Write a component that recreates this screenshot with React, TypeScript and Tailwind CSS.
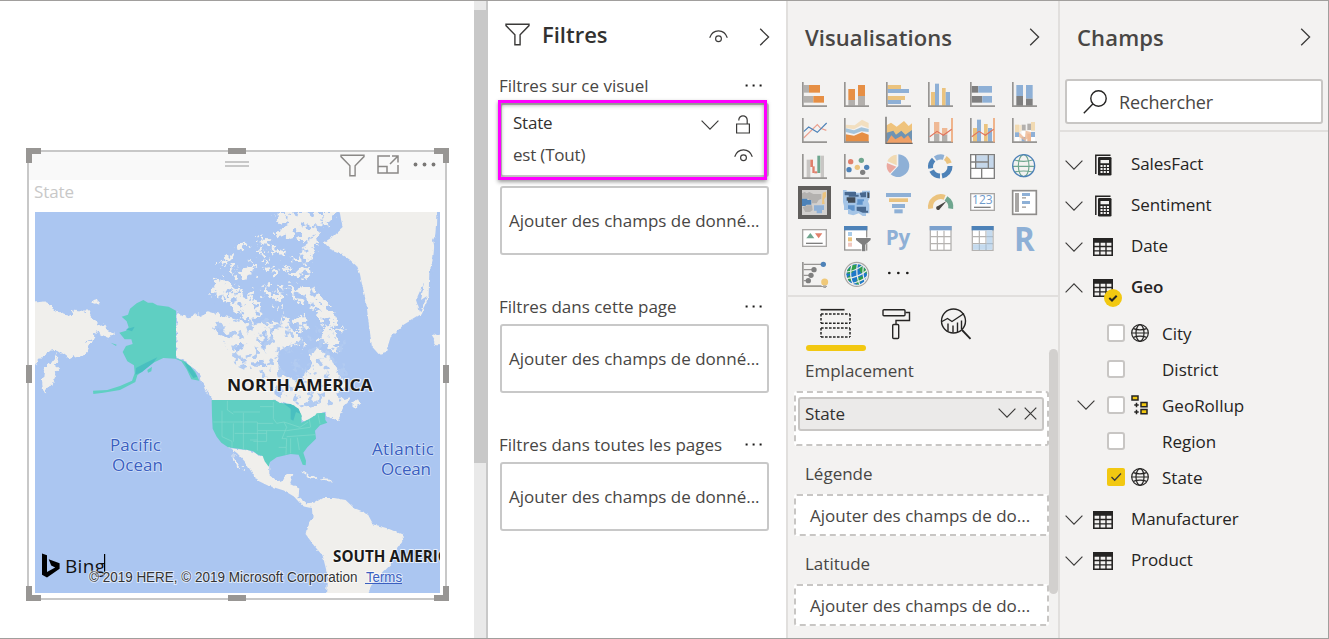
import type { ReactNode } from "react";

/* ---------- small glyphs ---------- */

function Chevron({ dir, className = "" }: { dir: "up" | "down" | "right"; className?: string }) {
  if (dir === "right")
    return (
      <svg width="11" height="18" viewBox="0 0 11 18" fill="none" stroke="#3b3a39" strokeWidth="1.3" className={"shrink-0 " + className}>
        <path d="M1.2 .8 9.6 9l-8.4 8.2" />
      </svg>
    );
  return (
    <svg width="18" height="10" viewBox="0 0 18 10" fill="none" stroke="#3b3a39" strokeWidth="1.15" className={"shrink-0 " + className}>
      <path d={dir === "down" ? "M.6.7 9 9.1 17.4.7" : "M.6 9.3 9 .9l8.4 8.4"} />
    </svg>
  );
}

function Funnel({ stroke, className = "" }: { stroke: string; className?: string }) {
  return (
    <svg width="25" height="23" viewBox="0 0 25 23" fill="none" stroke={stroke} strokeWidth="1.4" className={"shrink-0 " + className}>
      <path d="M1 1.2h23v1.4l-8.9 9.2v10H9.9v-10L1 2.6z" />
    </svg>
  );
}

function Eye({ className = "" }: { className?: string }) {
  return (
    <svg width="19" height="13" viewBox="0 0 19 13" fill="none" stroke="#3b3a39" strokeWidth="1.15" className={"shrink-0 " + className}>
      <path d="M.7 7.8C2.2 3.4 5.400.9 9.500.9s7.300 2.500 8.800 6.900" />
      <circle cx="9.500" cy="8.700" r="2.900" />
    </svg>
  );
}

function Dots({ className = "" }: { className?: string }) {
  return (
    <svg width="18" height="3" viewBox="0 0 18 3" fill="#1b1a19" className={"shrink-0 " + className}>
      <rect x=".6" y=".5" width="2" height="2" />
      <rect x="7.600" y=".5" width="2" height="2" />
      <rect x="14.600" y=".5" width="2" height="2" />
    </svg>
  );
}

/* ---------- map visual ---------- */

const ARCTIC = [
  "M755 225 770 210H940L935 232 910 250 880 262 890 300 872 330 866 362 825 366 808 350 840 338 848 304 820 284 790 292 765 272 782 250Z",
  "M588 368 605 342 632 335 618 356 600 366Z",
  "M643 328 658 302 672 303 666 326Z",
  "M692 278 718 284 742 312 728 320 704 300Z",
  "M618 368 650 384 690 362 702 392 680 400 650 408 634 392Z",
  "M720 355 745 358 748 388 724 386Z",
  "M752 384 775 388 770 402 752 398Z",
  "M780 362 800 384 856 378 860 408 800 404Z",
  "M570 417 600 410 634 436 616 452 602 476 574 466Z",
  "M610 468 638 438 664 456 692 444 700 488 716 520 700 530 662 532 634 508Z",
  "M718 434 746 428 752 462 734 470Z",
  "M764 432 790 420 788 450 776 470 774 506 756 490Z",
  "M798 432 836 440 870 430 892 466 930 498 942 536 972 572 928 556 894 536 880 504 850 486 808 474Z",
  "M820 524 848 514 852 552 824 570Z",
  "M892 582 912 542 936 572 954 622 930 626 906 606Z",
  "M785 582 816 566 850 608 826 612 806 596Z",
  "M700 326 722 324 726 338 704 336Z",
  "M745 320 790 322 792 336 760 338Z",
];

const MAINLAND =
  "M466 510 500 528 530 522 560 510 600 522 645 532 690 548 730 542 775 548 782 530 806 528 808 572 838 600 800 612 778 626 768 652 776 690 810 708 826 736 842 742 850 700 868 668 866 634 888 624 922 640 936 668 958 700 978 740 946 762 958 774 990 768 966 800 950 832 934 836 922 826 915 818 886 826 846 846 820 800 765 782H578L568 768 548 742 536 706 512 672 490 654H466Z";

const CENTRAL =
  "M620 915 625 922 685 930 700 935 715 945 730 950 746 968 746 1000 770 1022 788 1018 798 1000 818 1000 808 1030 836 1044 834 1070 856 1088 884 1086 905 1072 940 1072 975 1078 1000 1102 1040 1118 1058 1152 1100 1163 1145 1182 1148 1200 1122 1235 1112 1270 1085 1298 1060 1322 1036 1370H916L920 1300 906 1245 880 1215 855 1180 862 1150 876 1130 874 1102 846 1096 820 1068 790 1050 740 1034 708 1018 690 990 672 962 650 938Z";

function BingMap() {
  return (
    <svg width="405" height="381" viewBox="35 212 405 381" className="block" fontFamily="'Open Sans', sans-serif">
      <defs>
        <filter id="coast" x="-5%" y="-5%" width="110%" height="110%">
          <feTurbulence type="fractalNoise" baseFrequency="0.14" numOctaves="3" seed="7" result="n" />
          <feDisplacementMap in="SourceGraphic" in2="n" scale="9" xChannelSelector="R" yChannelSelector="G" />
        </filter>
        <filter id="coastRough" x="-5%" y="-5%" width="110%" height="110%">
          <feTurbulence type="fractalNoise" baseFrequency="0.16" numOctaves="3" seed="11" result="n" />
          <feDisplacementMap in="SourceGraphic" in2="n" scale="17" xChannelSelector="R" yChannelSelector="G" />
        </filter>
        <filter id="coastFine" x="-5%" y="-5%" width="110%" height="110%">
          <feTurbulence type="fractalNoise" baseFrequency="0.2" numOctaves="2" seed="3" result="n" />
          <feDisplacementMap in="SourceGraphic" in2="n" scale="3.5" xChannelSelector="R" yChannelSelector="G" />
        </filter>
        <filter id="lakes" x="0" y="0" width="100%" height="100%">
          <feTurbulence type="fractalNoise" baseFrequency="0.13" numOctaves="3" seed="21" result="n" />
          <feColorMatrix in="n" type="matrix" values="0 0 0 0 0  0 0 0 0 0  0 0 0 0 0  14 0 0 0 -8.1" result="m" />
          <feComposite in="SourceGraphic" in2="m" operator="in" />
        </filter>
      </defs>
      <rect x="35" y="212" width="405" height="381" fill="#abc6f1" />
      <g filter="url(#coastRough)">
        <g transform="translate(22.500 142) scale(.33333)" fill="#f0efec">
          {ARCTIC.map((d) => (
            <path key={d} d={d} />
          ))}
        </g>
      </g>
      <g filter="url(#coast)">
        <g transform="translate(21.200 141.200) scale(.33333)" fill="#f0efec">
          <path d="M30 488 70 484 92 494 96 510 124 516 152 522 160 508 188 512 212 522 226 542 250 560 276 572 278 582 262 594 240 582 225 570 214 592 190 606 212 600 204 622 180 646 150 656 130 640 112 628 104 662 108 695 95 722 76 756 66 748 62 722 66 690 88 664 106 642 112 628 88 632 66 646 50 664 30 676Z" />
          <path d="M212 482 226 474 232 486 218 488Z" />
          <path d="M1228 586 1250 576 1280 580V612H1244Z" />
          <path d="M990 786 1010 774 1022 792 1004 800Z" />
          <path d="M842 994 880 1002 886 1012 862 1006Z" />
          <path d="M900 1014 930 1016 926 1024 904 1022Z" />
          <path d="M636 940 650 962 664 982 656 984 640 958Z" />
          <path d={MAINLAND} />
        </g>
        <g transform="translate(21.200 141.200) scale(.33333)" fill="#abc6f1">
          <path d="M575 560 600 556 616 576 636 590 620 594 590 580Z" />
          <path d="M640 622 672 604 668 622 644 634Z" />
          <path d="M726 566 734 566 730 630 722 620Z" />
          <path d="M752 556 760 556 752 610 746 606Z" />
          <path d="M690 664 730 662 728 676 694 672Z" />
          <path d="M764 742 776 742 776 768 766 764Z" />
          <path d="M655 650 672 656 664 668Z" />
        </g>
      </g>
      <g filter="url(#lakes)">
        <path d="M212 322 275 315 345 335 350 395 330 408 300 408 285 395 262 378 236 366 222 340Z" fill="#b2cbf1" />
        <path d="M210 275 270 212 325 212 310 270 345 330 280 320 215 310Z" fill="#abc6f1" />
      </g>
      <g filter="url(#coastFine)">
        <g transform="translate(20.600 140.600) scale(.33333)" fill="#f0efec">
          <path d={CENTRAL} />
          <path d="M958 218 966 262 940 286 910 306 930 326 956 336 986 356 1008 376 1018 400 1024 430 1036 480 1046 560 1054 618 1074 640 1096 634 1110 590 1150 552 1200 522 1224 470 1226 400 1238 350 1246 260 1248 200H955Z" />
        </g>
        <path d="M416 300 424 282 421 300 427 296 420 312ZM430 272 434 262 432 280ZM433 240 437 232 435 250Z" fill="#abc6f1" />
      </g>
      <g transform="translate(20 140) scale(.33333)">
        <g fill="#5fcfc2">
          <path d="M370 480 384 488 398 488 412 496 446 500 468 512V655L490 662 508 676 526 696 538 722 514 718 500 688 484 664 466 656 430 654 400 668 372 690 352 706 346 726 300 750 250 758 220 762 219 752 262 750 300 738 336 722 344 700 342 676 322 664 308 636 318 618 338 612 334 598 314 598 298 578 318 572 326 562 320 544 305 530 324 524 330 506 350 490Z" />
          <path d="M382 690 396 680 394 694 384 698Z" />
          <path d="M272 608 290 614 288 618Z" />
          <path d="M575 780H765L778 788 800 792 822 796 836 810 845 826 844 848 866 838 886 826 890 820 915 818 916 840 922 848 900 856 885 872 888 896 862 922 850 938 858 962 857 976 848 974 836 944 812 942 796 946 770 952 750 966 746 980 734 964 728 948 714 944 700 934 684 930 624 922 604 908 590 890 578 866 576 828Z" />
        </g>
        <g fill="#49bfc0">
          <path d="M378 668 412 652 400 668 366 696 346 704 348 684Z" />
          <path d="M790 790 812 792 836 806 842 822 828 816 820 842 812 838 812 806Z" />
          <path d="M492 664 512 680 532 710 520 714 504 690Z" />
          <path d="M318 568 344 560 336 574Z" />
        </g>
        <g fill="none" stroke="#83dbcd" strokeWidth="2">
          <path d="M622 782V810L640 822M580 846H620M606 812V890L636 904V922M640 816H720M670 818V930M620 846H712V900M644 880H740M640 850V905M720 800H760M712 850H760M760 786V836L770 850M714 872H800M740 872V904H700M770 850 792 846 800 862 786 896M786 896H800L798 944M776 922H798M812 895V940M832 893 838 930M800 872 870 862M800 890 886 884M792 846 840 862 864 846M868 838 872 862M894 822 900 852M690 900H712V932" />
        </g>
      </g>
      <g fontWeight="700" fontSize="16" fill="#1b1a19" stroke="#ffffff" strokeOpacity=".7" strokeWidth="2" paintOrder="stroke">
        <text x="227" y="390.500" fontSize="16.500" textLength="145.500" lengthAdjust="spacingAndGlyphs">NORTH AMERICA</text>
        <text x="333" y="561.500" fontSize="16.500" textLength="125" lengthAdjust="spacingAndGlyphs">SOUTH AMERICA</text>
      </g>
      <g fontSize="17" fill="#3a5fc0" stroke="#d5e2f8" strokeWidth="1.500" paintOrder="stroke" fontWeight="500">
        <text x="110" y="450.500" textLength="51">Pacific</text>
        <text x="112" y="470.500" textLength="51">Ocean</text>
        <text x="372" y="454.500" textLength="62">Atlantic</text>
        <text x="381" y="474.500" textLength="50">Ocean</text>
      </g>
      <path d="M42 553.500 47 555.200V572l8.200-4.500-4-1.900-2.500-6.400 10.900 4v5.500L47 577.500 42 574.700Z" fill="#000" />
      <text x="65" y="572.500" fontSize="19" textLength="40" fill="#111">Bing</text>
      <rect x="104" y="554" width="1.200" height="18" fill="#000" />
      <g fontFamily="'Liberation Sans', sans-serif" fontSize="14" stroke="#ffffff" strokeOpacity=".6" strokeWidth="2" paintOrder="stroke">
        <text x="89" y="581.500" textLength="268.500" lengthAdjust="spacingAndGlyphs" fill="#333">© 2019 HERE, © 2019 Microsoft Corporation</text>
        <text x="366" y="581.500" textLength="36" lengthAdjust="spacingAndGlyphs" fill="#3a5fc0">Terms</text>
      </g>
      <path d="M365 583.500h37" stroke="#3a5fc0" strokeWidth="1" />
    </svg>
  );
}

function MapVisual() {
  return (
    <div className="relative h-[453px] w-[423px] pt-[2px] pl-px">
      <div className="h-[450px] w-[420px] border-2 border-[#c8c8c8] bg-white">
        <div className="flex h-7 items-start bg-[#f9f9f9] pl-[196px]">
          <div className="mt-[9px] h-[6px] w-6 border-y-2 border-[#c8c8c8]" />
          <Funnel stroke="#8a8886" className="mt-[2px] ml-[91px]" />
          <svg width="22" height="19" viewBox="0 0 22 19" fill="none" stroke="#8a8886" strokeWidth="1.500" className="mt-[3px] ml-[12px]">
            <path d="M13 1H1v17h20V10M1 11.500h9V18M13 9l7.500-7.500M15 1h6v6.500" />
          </svg>
          <svg width="23" height="5" viewBox="0 0 23 5" fill="#7a7876" className="mt-[10px] ml-[14px]">
            <circle cx="2.500" cy="2.500" r="1.900" />
            <circle cx="11.500" cy="2.500" r="1.900" />
            <circle cx="20.500" cy="2.500" r="1.900" />
          </svg>
        </div>
        <div className="flex h-8 items-start pl-[5px] text-[17px] leading-6 font-medium tracking-[-0.1px] text-[#c8c8c8]">State</div>
        <div className="ml-[6px] w-[405px]">
          <BingMap />
        </div>
      </div>
      <div className="absolute top-0 left-0 h-[15px] w-[15px] border-t-[6px] border-l-[6px] border-[#989694]" />
      <div className="absolute top-0 right-0 h-[15px] w-[15px] border-t-[6px] border-r-[6px] border-[#989694]" />
      <div className="absolute bottom-0 left-0 h-[15px] w-[15px] border-b-[6px] border-l-[6px] border-[#989694]" />
      <div className="absolute right-0 bottom-0 h-[15px] w-[15px] border-r-[6px] border-b-[6px] border-[#989694]" />
      <div className="absolute top-0 left-[202px] h-[6px] w-[18px] bg-[#989694]" />
      <div className="absolute bottom-0 left-[202px] h-[6px] w-[18px] bg-[#989694]" />
      <div className="absolute top-[217px] left-0 h-[18px] w-[6px] bg-[#989694]" />
      <div className="absolute top-[217px] right-0 h-[18px] w-[6px] bg-[#989694]" />
    </div>
  );
}

/* ---------- filters pane ---------- */

function SectionTitle({ children, className = "" }: { children: ReactNode; className?: string }) {
  return (
    <div className={"flex h-6 w-[264px] items-center justify-between pt-px text-[17px] leading-6 text-[#484644] " + className}>
      <span>{children}</span>
      <Dots className="mb-[1px]" />
    </div>
  );
}

function DropCard({ className = "" }: { className?: string }) {
  return (
    <div className={"ml-px flex h-[69px] w-[269px] items-center rounded-[3px] border-2 border-[#c8c8c8] bg-white pl-[7px] text-[17px] whitespace-nowrap text-[#484644] " + className}>
      Ajouter des champs de donné...
    </div>
  );
}

function FiltersPane() {
  return (
    <section className="w-[300px] shrink-0 border-r-2 border-[#e1dfdd] bg-white pl-[11px]">
      <div className="flex h-[72px] items-start pt-[22px] pl-[6px]">
        <Funnel stroke="#3b3a39" />
        <h2 className="-mt-[5px] ml-[12px] w-[156px] text-[22px] leading-[32px] font-semibold text-[#323130]">Filtres</h2>
        <Eye className="mt-[7px] ml-[11px]" />
        <Chevron dir="right" className="mt-[5px] ml-[31px]" />
      </div>
      <SectionTitle>Filtres sur ce visuel</SectionTitle>
      <div className="relative mt-[6px] ml-px flex h-[74px] w-[269px] flex-col rounded-[3px] border-2 border-[#c8c8c8] bg-white pt-[2px] pr-[16px] pl-[11px]">
        <div className="flex h-8 items-center text-[17px] tracking-[-0.2px] text-[#323130]">
          <span className="grow">State</span>
          <Chevron dir="down" className="mt-[3px]" />
          <svg width="16" height="19" viewBox="0 0 16 19" fill="none" stroke="#3b3a39" strokeWidth="1.200" className="mt-[3px] ml-[16px]">
            <path d="M1.600 9h12.800v9H1.600zM3.800 5.500V5a4.200 4.200 0 0 1 8.400 0v4" />
          </svg>
        </div>
        <div className="flex h-8 items-center text-[17px] tracking-[-0.2px] text-[#484644]">
          <span className="grow">est (Tout)</span>
          <Eye className="-mr-[2px]" />
        </div>
        <div className="absolute -top-[5px] -left-[4px] h-[80px] w-[269px] border-[3px] border-[#ff00ff] shadow-[0_2px_4px_rgba(0,0,0,.4),inset_0_2px_4px_rgba(0,0,0,.35)]" />
      </div>
      <DropCard className="mt-[9px]" />
      <SectionTitle className="mt-[39px]">Filtres dans cette page</SectionTitle>
      <DropCard className="mt-[6px]" />
      <SectionTitle className="mt-[39px]">Filtres dans toutes les pages</SectionTitle>
      <DropCard className="mt-[6px]" />
    </section>
  );
}

/* ---------- visualisation gallery: every glyph is drawn on a 75-unit grid ---------- */

const GREY = "#b3b0ad";
const ORANGE = "#e68f45";
const BLUE = "#8eb0d6";
const GOLD = "#ebc37e";
const DARK = "#7f7f7f";
const NAVY = "#4d82b8";
const PINK = "#eba9a0";

type Bar = [string, number, number, number, number];
const bars = (list: Bar[]) => list.map(([f, x, y, w, h], i) => <rect key={i} x={x} y={y} width={w} height={h} fill={f} />);
const axis = <path d="M2.500 0V72.500H75" fill="none" stroke="#979593" strokeWidth="5" />;
const rightAxis = <path d="M72 0V73" fill="none" stroke="#efa877" strokeWidth="5" />;
const trend = <path d="M5 56 27 40 46 52 71 34" fill="none" stroke="#e0735c" strokeWidth="3.500" />;

function tableGrid(head: string) {
  return (
    <>
      <rect x="7" y="2" width="62" height="71" fill="#fff" stroke="#b5b3b1" strokeWidth="4" />
      <path d="M7 32H69M7 53H69M28 14V73M48 14V73" stroke="#b5b3b1" strokeWidth="3.500" />
      <rect x="5" y="0" width="66" height="13" fill={head} />
    </>
  );
}

const GLYPHS: ReactNode[] = [
  <>{bars([[GREY, 5, 9, 16, 23], [ORANGE, 21, 9, 33, 23], [GREY, 5, 42, 29, 20], [ORANGE, 34, 42, 32, 20]])}{axis}</>,
  <>{bars([[ORANGE, 13, 21, 20, 33], [GREY, 13, 54, 20, 17], [ORANGE, 42, 9, 21, 33], [GREY, 42, 42, 21, 29]])}{axis}</>,
  <>{bars([[GOLD, 5, 9, 40, 12], [BLUE, 5, 21, 64, 12], [GOLD, 5, 42, 52, 12], [BLUE, 5, 54, 40, 12]])}{axis}</>,
  <>{bars([[GOLD, 9, 30, 12, 42], [BLUE, 21, 5, 12, 67], [GOLD, 42, 18, 11, 54], [BLUE, 53, 30, 13, 42]])}{axis}</>,
  <>{bars([[DARK, 5, 12, 20, 20], [BLUE, 25, 12, 41, 20], [DARK, 5, 42, 32, 20], [BLUE, 37, 42, 29, 20]])}{axis}</>,
  <>{bars([[BLUE, 13, 9, 20, 33], [DARK, 13, 42, 20, 30], [BLUE, 42, 9, 20, 41], [DARK, 42, 50, 20, 22]])}{axis}</>,

  <>
    <g fill="none" strokeWidth="3.500">
      <path d="M5 60 46 20 56 31 73 37" stroke="#eba08f" />
      <path d="M5 41 20 27 46 43 74 15" stroke={NAVY} />
    </g>
    {axis}
  </>,
  <>
    <path d="M5 20 32 22 54 5 74 15V31L52 22 30 34 5 30Z" fill="#f2dfc0" />
    <path d="M5 31 30 37 52 28 74 33V42L52 40 30 48 5 42Z" fill="#a4c4dc" />
    <path d="M5 49 30 53 54 43 74 50V72H5Z" fill={ORANGE} />
    {axis}
  </>,
  <>
    <path d="M2 22 15 14 32 26 54 9 68 24 78 16V60H2Z" fill="#efc37c" />
    <path d="M2 44 22 38 30 50 46 38 58 50 78 36V74H2Z" fill="#6f93b3" />
    <path d="M2 74 16 52 28 64 46 54 54 62 66 52 78 70V76H2Z" fill="#f0a066" />
    <path d="M0-4V76H80" fill="none" stroke="#6b6967" strokeWidth="4" />
  </>,
  <>{bars([["#efb995", 18, 12, 16, 36], [GREY, 18, 48, 16, 24], ["#efb995", 42, 30, 16, 20], [GREY, 42, 50, 16, 22]])}{axis}{rightAxis}{trend}</>,
  <>{bars([[GOLD, 9, 30, 12, 42], [BLUE, 21, 5, 12, 67], [GOLD, 42, 18, 11, 54], [BLUE, 54, 30, 12, 42]])}{axis}{rightAxis}{trend}</>,
  <>
    {bars([["#f1dab2", 9, 20, 12, 24], [BLUE, 9, 43, 12, 14], ["#fff", 9, 57, 12, 14], [GREY, 29, 20, 12, 18], ["#fff", 29, 38, 12, 18], [BLUE, 29, 57, 12, 14], [GREY, 46, 17, 12, 20], ["#fff", 46, 37, 12, 10], ["#efb995", 46, 47, 12, 24], ["#f1dab2", 57, 12, 12, 26], [BLUE, 57, 42, 12, 15], ["#fff", 57, 57, 12, 14]])}
    <path d="M21 20 29 22V38L21 44Z" fill="#f5e6cc" />
    <path d="M21 43 41 62V70L21 56ZM41 38 57 42V58L38 66Z" fill="#efb995" opacity=".8" />
    {axis}
  </>,

  <>{bars([["#c8c6c4", 14, 17, 11, 55], ["#e0806c", 25, 17, 8, 22], ["#e0806c", 31, 37, 7, 20], ["#e0806c", 37, 52, 9, 6], ["#6fa68f", 46, 5, 9, 52], ["#c8c6c4", 56, 5, 10, 67]])}{axis}</>,
  <>
    <circle cx="20" cy="23" r="8" fill="#e0806c" />
    <circle cx="52" cy="19" r="8" fill="#6fa68f" />
    <circle cx="15" cy="47" r="8" fill={NAVY} />
    <circle cx="40" cy="40" r="8" fill={GOLD} />
    <circle cx="56" cy="55" r="8" fill={DARK} />
    <circle cx="68" cy="40" r="8" fill={NAVY} />
    {axis}
  </>,
  <>
    <path d="M37 36V1A34 34 0 1 1 14 61Z" fill={BLUE} />
    <path d="M32 34 4 22A33 33 0 0 1 32 2Z" fill="#f1dab2" />
    <path d="M31 38 3 27A33 33 0 0 0 12 58Z" fill={PINK} />
  </>,
  <g fill="none" strokeWidth="15">
    <path d="M22 14A29 29 0 0 1 47 10" stroke={BLUE} />
    <path d="M52 12A29 29 0 0 1 64 28" stroke={GOLD} />
    <path d="M66 36A29 29 0 0 1 42 66" stroke={NAVY} />
    <path d="M36 66A29 29 0 0 1 11 50" stroke={NAVY} />
    <path d="M8 43A29 29 0 0 1 17 17" stroke={NAVY} />
  </g>,
  <>
    <rect x="2" y="2" width="71" height="71" fill="#fff" />
    <rect x="18" y="4" width="36" height="20" fill="#c5d7ea" />
    <rect x="56" y="4" width="16" height="38" fill="#c5d7ea" />
    <rect x="18" y="26" width="36" height="16" fill="#c5d7ea" />
    <path d="M2 2H73V73H2ZM2 43H73M17 2V43M17 24H55M55 2V43M2 24H17M35 43V73" fill="none" stroke={DARK} strokeWidth="4" />
  </>,
  <g fill="none">
    <g stroke="#6fa68f" strokeWidth="3.500">
      <path d="M8 18Q35 26 62 18M3 37H69M8 54Q35 48 62 54" />
      <ellipse cx="35" cy="35" rx="16" ry="33" />
    </g>
    <circle cx="35" cy="35" r="33" stroke={NAVY} strokeWidth="4" />
  </g>,

  <>
    <path d="M0 10 8 6 14 10 22 6 34 12H58V26L50 30 44 40H30V30H20V26H0Z" fill="#b3b1af" />
    <path d="M62 8 72 5V20L66 28 68 42H60Z" fill={GOLD} />
    <path d="M0 26H16V30H28V44H14L10 48H0Z" fill={NAVY} />
    <path d="M36 46H66V60H60V70H44V62H36Z" fill={BLUE} />
    <path d="M2 52 16 46H30L32 60 24 66H10Z" fill="#b3b1af" />
  </>,
  <>
    <path d="M-3 0H8V4H34V8H54V2H78V22L72 34 76 44V70H66V78H56L44 70 28 76 12 72V60H0V48L-3 36Z" fill="#a4c4e6" />
    <path d="M2 6H36V14H44V20H14V16H2ZM48 8 66 6V22H50V16H48ZM38 50H66V62H72V68H56L46 64 38 62Z" fill="#48688f" />
    <path d="M8 22H34V38H12V32H8ZM70 6 76 8V24H70Z" fill="#424c58" />
    <path d="M40 28H60V34H56V44H38V40H40ZM12 46H32V62H24L18 58 12 56Z" fill="#5f93cb" />
  </>,
  <>{bars([[BLUE, 0, 9, 75, 12], [GOLD, 9, 25, 57, 11], [BLUE, 18, 42, 39, 12], [BLUE, 25, 58, 25, 12]])}</>,
  <>
    <path d="M8 56A31 31 0 0 1 50 22" fill="none" stroke={GOLD} strokeWidth="15" />
    <path d="M54 25A31 31 0 0 1 68 56" fill="none" stroke="#6fa68f" strokeWidth="15" />
    <path d="M56 33 30 48A6 6 0 1 0 36 56Z" fill="#484644" />
  </>,
  <>
    <rect x="2" y="11" width="71" height="50" fill="#fff" stroke="#a8a6a4" strokeWidth="4" />
    <path d="M12 52H62" stroke={DARK} strokeWidth="4" />
    <text x="6" y="42" fontSize="36" textLength="62" lengthAdjust="spacingAndGlyphs" fontFamily="'Open Sans', sans-serif" fill="#6f9bcb">123</text>
  </>,
  <>
    <rect x="2" y="2" width="71" height="71" fill="#fff" stroke="#8f8d8b" strokeWidth="5" />
    <rect x="9" y="9" width="12" height="57" fill="#a8a6a4" />
    {bars([[BLUE, 30, 9, 24, 9], [GREY, 30, 21, 12, 5], [BLUE, 30, 33, 24, 9], [GREY, 30, 49, 12, 5]])}
  </>,

  <>
    <rect x="2" y="11" width="71" height="50" fill="#fff" stroke="#a8a6a4" strokeWidth="4" />
    <path d="M13 37 25 21 37 37Z" fill="#6fa68f" />
    <path d="M39 22H61L50 37Z" fill="#e0806c" />
    <path d="M12 52H62" stroke={DARK} strokeWidth="4" />
  </>,
  <>
    <rect x="2" y="2" width="66" height="70" fill="#fff" stroke="#979593" strokeWidth="4" />
    <rect x="0" y="0" width="70" height="13" fill={NAVY} />
    {bars([["#a9cbe8", 12, 18, 12, 12], [GOLD, 12, 34, 12, 12], ["#f0c8c0", 12, 50, 12, 12]])}
    <path d="M36 36H80V42L64 56V76H54V56L36 42Z" fill={DARK} stroke="#fff" strokeWidth="3" paintOrder="stroke" />
  </>,
  <text x="-1" y="58" fontSize="66" fontWeight="700" textLength="74" lengthAdjust="spacingAndGlyphs" fontFamily="'Open Sans', sans-serif" fill={BLUE}>Py</text>,
  <>{tableGrid("#7ba1cd")}</>,
  <>
    {tableGrid(NAVY)}
    <path d="M50 14H67V71H9V55H50Z" fill="#c5dbef" />
    <path d="M50 32H69M50 53H69M28 55V73M48 55V73" stroke="#a5b8c9" strokeWidth="3" />
  </>,
  <text x="6" y="74" fontSize="100" fontWeight="700" textLength="62" lengthAdjust="spacingAndGlyphs" fontFamily="'Open Sans', sans-serif" fill={BLUE}>R</text>,

  <>
    <path d="M5 7H64M5 23H36M5 40H26M5 56H18" stroke="#979593" strokeWidth="3.500" />
    <circle cx="64" cy="7" r="8" fill={NAVY} />
    <circle cx="36" cy="23" r="8" fill={DARK} />
    <circle cx="27" cy="40" r="8" fill={DARK} />
    <circle cx="19" cy="56" r="8" fill={DARK} />
    {axis}
    <circle cx="68" cy="60" r="14" fill="#f3f2f1" />
    <circle cx="68" cy="60" r="10.500" fill="#f0c979" />
    <path d="M63 72H73M64 76H72" stroke="#979593" strokeWidth="3" />
  </>,
  <>
    <circle cx="38" cy="37" r="31" fill="#1f78c8" />
    <path d="M10 24 24 10 40 8 34 22 24 32 10 36ZM48 10 64 20 70 36 60 30 52 34 46 24ZM10 46 18 40 24 46 20 58 14 56ZM40 48 56 42 58 52 48 60 44 68 36 64Z" fill="#2f9e4b" />
    <g fill="none" stroke="#ecebe9" strokeWidth="3.500">
      <path d="M8 30Q36 26 56 10M6 50Q46 46 70 24M18 66Q54 58 72 42" />
      <path d="M24 8Q14 40 28 68M40 6Q34 38 48 70M58 12Q54 42 64 60" />
    </g>
    <circle cx="38" cy="37" r="36" fill="none" stroke="#a8a6a4" strokeWidth="3.500" />
  </>,
  <g fill="#1b1a19">
    <circle cx="10" cy="33" r="4" />
    <circle cx="37" cy="33" r="4" />
    <circle cx="64" cy="33" r="4" />
  </g>,
];

const SELECTED = 18;

function Gallery() {
  return (
    <div className="grid grid-cols-[repeat(6,25px)] gap-x-[17px] gap-y-[11px]">
      {GLYPHS.map((g, i) => (
        <div key={i} className={i === SELECTED ? "-m-1 size-[33px] border-4 border-[#605e5c] bg-[#d2d0ce]" : "size-[25px]"}>
          <svg width="25" height="25" viewBox="0 0 75 75" className="block overflow-visible">
            {g}
          </svg>
        </div>
      ))}
    </div>
  );
}

function Well({ label }: { label: string }) {
  return (
    <div className="flex h-[90px] shrink-0 flex-col">
      <div className="h-[34px] pt-[2px] pl-[11px] text-[17px] leading-6 text-[#484644]">{label}</div>
      <div className="flex h-[42px] items-center rounded-[3px] border-2 border-dashed border-[#c8c6c4] bg-white pt-[2px] pl-[14px] text-[17px] whitespace-nowrap text-[#484644]">Ajouter des champs de do...</div>
    </div>
  );
}

function VisualisationsPane() {
  return (
    <section className="flex w-[270px] shrink-0 flex-col overflow-hidden bg-[#f3f2f1]">
      <div className="flex h-[81px] shrink-0 items-start pt-[20px] pl-[17px]">
        <h2 className="w-[224px] text-[22px] leading-[32px] font-semibold tracking-[0.07px] text-[#484644]">Visualisations</h2>
        <Chevron dir="right" className="mt-[7px]" />
      </div>
      <div className="h-[213px] shrink-0 pl-[14px]">
        <Gallery />
      </div>
      <div className="h-[2px] shrink-0 bg-[#e1dfdd]" />
      <div className="flex h-[48px] shrink-0 items-start pt-[11px] pl-[32px]">
        <svg width="32" height="32" viewBox="0 0 32 32" fill="none" stroke="#252423">
          <path d="M.5 1.700h24" strokeWidth="1.600" />
          <path d="M1 6h29M1 15.300h29M1 20h29M1 29h29M1 6v9.300M30 6v9.300M1 20v9M30 20v9" strokeWidth="1.500" strokeDasharray="2.600 1.400" />
        </svg>
        <svg width="29" height="32" viewBox="0 0 29 32" fill="none" stroke="#252423" strokeWidth="1.400" className="ml-[30px]">
          <rect x="1" y="1.700" width="22" height="6" rx="1" />
          <path d="M23.500 4.500H27.500V12.500H14V16" />
          <rect x="10.700" y="16.500" width="6" height="14" rx="1" />
        </svg>
        <svg width="32" height="32" viewBox="0 0 32 32" fill="none" stroke="#252423" strokeWidth="1.400" className="ml-[29px]">
          <circle cx="13.500" cy="13" r="12" />
          <path d="M22 22 30.500 30.800" strokeWidth="1.800" />
          <path d="M2 13.500 7.500 10.500 12 13.500 24 5.500M8 15.500V23M13 17.500V24.500M17.500 14.500V24M21.500 12.500V21" />
        </svg>
      </div>
      <div className="flex grow">
        <div className="flex w-[261px] shrink-0 flex-col pl-[6px]">
          <div className="ml-[12px] h-[6px] w-[60px] shrink-0 rounded-full bg-[#f2c811]" />
          <div className="mt-[8px] h-[32px] shrink-0 pl-[11px] text-[17px] leading-6 text-[#484644]">Emplacement</div>
          <div className="h-[55px] w-[255px] shrink-0 rounded-[3px] border-2 border-dashed border-[#c8c6c4] bg-white px-[1px] pt-[4px]">
            <div className="ml-px flex h-[34px] w-[246px] items-center rounded-[3px] border-2 border-[#c8c6c4] bg-[#ebeae9] pl-[5px] text-[17px] tracking-[-0.1px] text-[#323130]">
              <span className="w-[193px]">State</span>
              <Chevron dir="down" className="-mt-[2px]" />
              <svg width="13" height="13" viewBox="0 0 13 13" stroke="#3b3a39" strokeWidth="1.200" className="-mt-px ml-[8px]">
                <path d="M.7.7l11.600 11.600M12.300.7.7 12.300" />
              </svg>
            </div>
          </div>
          <div className="h-[14px] shrink-0" />
          <Well label="Légende" />
          <Well label="Latitude" />
        </div>
        <div className="mt-[4px] h-[245px] w-[9px] rounded-full bg-[#d2d0ce]" />
      </div>
    </section>
  );
}

/* ---------- fields pane ---------- */

function TableIcon() {
  return (
    <svg width="20" height="18" viewBox="0 0 20 18" className="block">
      <path d="M0 0H20V18H0Z" fill="#252423" />
      <path d="M1.600 4.800h4.600v3H1.600zM7.600 4.800h4.700v3H7.600zM13.700 4.800h4.700v3h-4.700zM1.600 9.200h4.600v3H1.600zM7.600 9.200h4.700v3H7.600zM13.700 9.200h4.700v3h-4.700zM1.600 13.600h4.600v2.900H1.600zM7.600 13.600h4.700v2.900H7.600zM13.700 13.600h4.700v2.900h-4.700z" fill="#f3f2f1" />
    </svg>
  );
}

function CalculatorIcon() {
  return (
    <svg width="18" height="22" viewBox="0 0 18 22" className="block">
      <path d="M1.800 20V1.200H16.500" fill="none" stroke="#252423" strokeWidth="1.500" />
      <rect x="4" y="3" width="13.500" height="18.500" rx="1.300" fill="#252423" />
      <path d="M6.500 6h8.500v3.200H6.500zM6.500 11h2.100v2H6.500zM9.700 11h2.100v2H9.700zM12.900 11H15v2h-2.100zM6.500 14h2.100v2H6.500zM9.700 14h2.100v2H9.700zM12.900 14H15v2h-2.100zM6.500 17h2.100v2H6.500zM9.700 17h2.100v2H9.700zM12.900 17H15v2h-2.100z" fill="#f3f2f1" />
    </svg>
  );
}

function GlobeIcon() {
  return (
    <svg width="18" height="18" viewBox="0 0 18 18" fill="none" stroke="#252423" strokeWidth="1.200">
      <circle cx="9" cy="9" r="8.300" />
      <ellipse cx="9" cy="9" rx="4" ry="8.300" />
      <path d="M2.300 4.600Q9 7 15.700 4.600M.7 9H17.300M2.300 13.400Q9 11 15.700 13.400" />
    </svg>
  );
}

function HierarchyIcon() {
  return (
    <svg width="18" height="20" viewBox="0 0 18 20" fill="#f2c811" stroke="#252423" strokeWidth="1.500">
      <path d="M1 1h6v4H1zM10 7.500h6v4.200h-6zM10 14.500h6v4.200h-6z" />
      <path d="M3.300 10h4.400M5.500 7.800v4.400M3.300 17h4.400M5.500 14.800v4.400" />
    </svg>
  );
}

function TableRow({ name, icon, open, active }: { name: string; icon: ReactNode; open?: boolean; active?: boolean }) {
  return (
    <div className="flex h-[41px] items-center pl-[5px] text-[17px] text-[#252423]">
      <Chevron dir={open ? "up" : "down"} className="mt-[3px]" />
      <div className="relative mt-[3px] ml-[10px] flex w-5 justify-center">
        {icon}
        {active && (
          <svg width="18" height="18" viewBox="0 0 18 18" className="absolute top-[10px] left-[11px]">
            <circle cx="9" cy="9" r="9" fill="#f2c811" />
            <path d="M5.300 9 8 11.500 12.700 6.800" fill="none" stroke="#252423" strokeWidth="2" />
          </svg>
        )}
      </div>
      <span className={"ml-[18px] tracking-[-0.1px] " + (active ? "font-semibold" : "")}>{name}</span>
    </div>
  );
}

function FieldRow({ name, icon, checked, expandable }: { name: string; icon?: ReactNode; checked?: boolean; expandable?: boolean }) {
  return (
    <div className="flex h-9 items-center pl-[17px] text-[17px] text-[#252423]">
      <div className="w-[30px]">{expandable && <Chevron dir="down" />}</div>
      {checked ? (
        <div className="flex size-[18px] items-center justify-center rounded-[2px] bg-[#f2c811]">
          <svg width="12" height="10" viewBox="0 0 12 10" fill="none" stroke="#3b3a39" strokeWidth="1.300">
            <path d="M1.500 5 4.700 8.200 11 1.500" />
          </svg>
        </div>
      ) : (
        <div className="size-[18px] rounded-[3px] border-2 border-[#c8c6c4] bg-white" />
      )}
      <div className="ml-[6px] w-[31px]">{icon}</div>
      <span className="pt-px">{name}</span>
    </div>
  );
}

function FieldsPane() {
  return (
    <section className="flex grow flex-col border-l-2 border-[#e1dfdd] bg-[#f3f2f1]">
      <div className="flex h-[78px] items-start pt-[20px] pl-[17px]">
        <h2 className="w-[223px] text-[22px] leading-[32px] font-semibold tracking-[0.15px] text-[#484644]">Champs</h2>
        <Chevron dir="right" className="mt-[7px]" />
      </div>
      <div className="ml-[5px] flex h-[45px] w-[258px] items-center rounded-[3px] border-2 border-[#c8c6c4] bg-white pl-[16px] text-[18px] tracking-[-0.15px] text-[#484644]">
        <svg width="24" height="24" viewBox="0 0 24 24" fill="none" stroke="#252423" strokeWidth="1.400">
          <circle cx="15.500" cy="8.500" r="7.700" />
          <path d="M9.800 14 .8 23.200" />
        </svg>
        <span className="ml-[12px] pt-px">Rechercher</span>
      </div>
      <div className="mt-[6px] h-[2px] shrink-0 bg-[#e1dfdd]" />
      <div className="mt-[11px] flex flex-col">
        <TableRow name="SalesFact" icon={<CalculatorIcon />} />
        <TableRow name="Sentiment" icon={<CalculatorIcon />} />
        <TableRow name="Date" icon={<TableIcon />} />
        <TableRow name="Geo" icon={<TableIcon />} open active />
        <div className="mt-[8px] mb-[3px]">
          <FieldRow name="City" icon={<GlobeIcon />} />
          <FieldRow name="District" />
          <FieldRow name="GeoRollup" icon={<HierarchyIcon />} expandable />
          <FieldRow name="Region" />
          <FieldRow name="State" icon={<GlobeIcon />} checked />
        </div>
        <TableRow name="Manufacturer" icon={<TableIcon />} />
        <TableRow name="Product" icon={<TableIcon />} />
      </div>
    </section>
  );
}

export default function App() {
  return (
    <div className="flex h-[639px] w-[1329px] overflow-hidden border-t border-r border-b border-[#a19f9d] bg-white font-['Open_Sans',sans-serif]">
      <main className="w-[474px] shrink-0 pt-[147px] pl-[26px]">
        <MapVisual />
      </main>
      <div className="w-[14px] shrink-0 border-r-2 border-[#c8c8c8] bg-[#e9e9e9] pt-[9px]">
        <div className="h-[453px] bg-[#c8c8c8]" />
      </div>
      <FiltersPane />
      <VisualisationsPane />
      <FieldsPane />
    </div>
  );
}
